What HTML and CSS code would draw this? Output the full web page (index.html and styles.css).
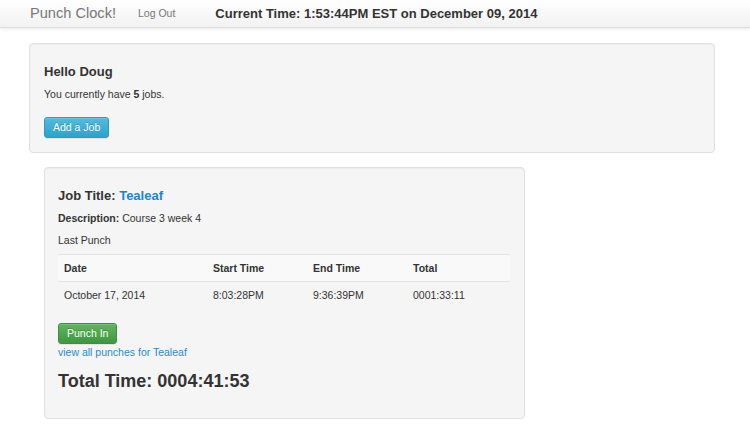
FILE: index.html
```html
<!DOCTYPE html>
<html lang="en">
<head>
<meta charset="utf-8">
<title>Punch Clock!</title>
<link rel="stylesheet" href="styles.css">
</head>
<body>
<nav class="navbar">
  <span class="brand">Punch Clock!</span>
  <a class="nav-link" href="#">Log Out</a>
  <span class="clock">Current Time: 1:53:44PM EST on December 09, 2014</span>
</nav>
<main class="container">
  <section class="well well-main">
    <h4 class="greet">Hello Doug</h4>
    <p class="count">You currently have <b>5</b> jobs.</p>
    <a class="btn btn-info" href="#">Add a Job</a>
  </section>
  <section class="well job-card">
    <h4 class="job-title">Job Title: <a href="#">Tealeaf</a></h4>
    <p class="desc"><b>Description:</b> Course 3 week 4</p>
    <p class="last">Last Punch</p>
    <table class="punches">
      <tr class="head-row">
        <th class="c-date">Date</th>
        <th class="c-start">Start Time</th>
        <th class="c-end">End Time</th>
        <th class="c-total">Total</th>
      </tr>
      <tr>
        <td>October 17, 2014</td>
        <td>8:03:28PM</td>
        <td>9:36:39PM</td>
        <td>0001:33:11</td>
      </tr>
    </table>
    <a class="btn btn-success" href="#">Punch In</a>
    <a class="all-link" href="#">view all punches for Tealeaf</a>
    <h3 class="total">Total Time: 0004:41:53</h3>
  </section>
</main>
</body>
</html>
```
FILE: styles.css
```css
* { box-sizing: border-box; }
html, body { margin: 0; padding: 0; background: #fff; }
body {
  font-family: "Liberation Sans", Arial, Helvetica, sans-serif;
  font-size: 10.5px;
  line-height: 14.7px;
  color: #333;
}
a { color: #2185d0; text-decoration: none; }

.navbar {
  display: flex;
  align-items: flex-start;
  height: 28px;
  padding-left: 30px;
  background: linear-gradient(to bottom, #ffffff 0%, #f1f1f1 100%);
  border-bottom: 1px solid #dcdcdc;
  box-shadow: 0 1px 4px rgba(0,0,0,0.09);
}
.brand {
  font-size: 14.6px;
  line-height: 27px;
  color: #777;
}
.nav-link {
  margin-left: 22px;
  line-height: 27px;
  color: #777;
}
.clock {
  margin-left: 40px;
  font-size: 13px;
  font-weight: bold;
  line-height: 27px;
  color: #333;
}

.container {
  padding: 15px 0 0 29px;
}
.well {
  background: #f5f5f5;
  border: 1px solid #e1e1e1;
  border-radius: 4px;
  box-shadow: inset 0 1px 2px rgba(0,0,0,0.04);
  padding: 14px 14px 14px;
}
.well-main {
  width: 686px;
  margin-bottom: 14px;
}
.job-card {
  width: 481px;
  margin-left: 15px;
  padding-left: 13px;
}

h4 {
  font-size: 13px;
  line-height: 14.3px;
  font-weight: bold;
  margin: 7px 0 8px;
}
p { margin: 0 0 7px; }
.count { margin-bottom: 15px; }
.job-title { margin-bottom: 7.5px; }
.job-title a { color: #1d84d2; }

.btn {
  display: inline-block;
  padding: 2px 8px;
  line-height: 15px;
  border: 1px solid;
  border-radius: 3px;
  color: #fff;
  text-shadow: 0 -1px 0 rgba(0,0,0,0.2);
  box-shadow: inset 0 1px 0 rgba(255,255,255,0.15), 0 1px 1px rgba(0,0,0,0.075);
}
.btn-info {
  background: linear-gradient(to bottom, #55bade 0%, #2aa3cb 100%);
  border-color: #279dc4;
}
.btn-success {
  background: linear-gradient(to bottom, #5cb85c 0%, #419641 100%);
  border-color: #3e8f3e;
}

.punches {
  width: 452px;
  border-collapse: collapse;
  table-layout: fixed;
  margin-bottom: 14.7px;
}
.punches th, .punches td {
  text-align: left;
  padding: 6px 6px;
  line-height: 14px;
  border-top: 1px solid #e4e4e4;
  vertical-align: top;
}
.punches th { font-weight: bold; }
.head-row { background: #f9f9f9; }
.c-date { width: 149px; }
.c-start { width: 100px; }
.c-end { width: 100px; }

.all-link {
  display: block;
  margin-top: 1px;
  color: #2a89d3;
}
.total {
  font-size: 18px;
  line-height: 19.8px;
  font-weight: bold;
  margin: 12px 0 13px;
}
```
